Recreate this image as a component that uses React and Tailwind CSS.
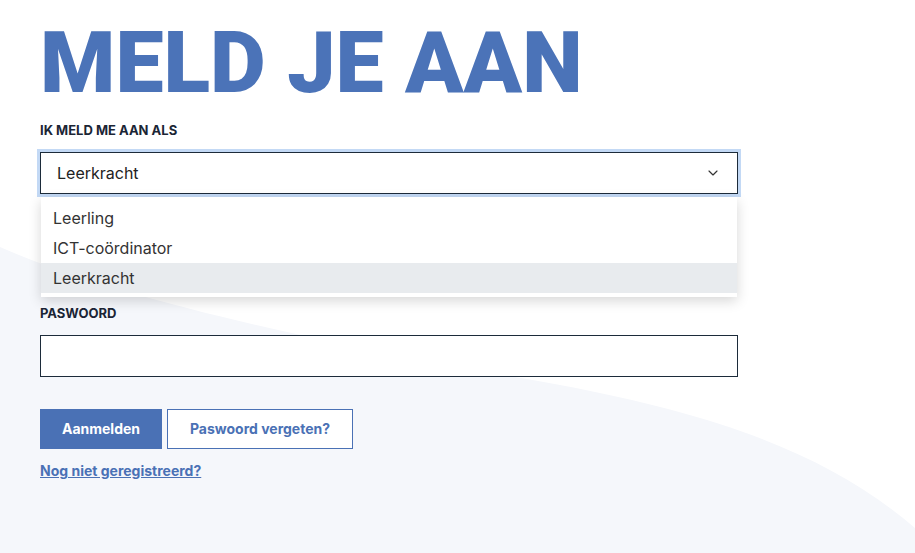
import { ChevronDown } from 'lucide-react';

const roles = ['Leerling', 'ICT-coördinator', 'Leerkracht'];

const Field = ({ label, children }) => (
  <div className="mb-6">
    <div className="mb-[14px] h-4 text-[13px] font-bold uppercase leading-4 text-[#1b2535]">{label}</div>
    {children}
  </div>
);

export default function App() {
  const selected = 'Leerkracht';

  return (
    <div className="relative min-h-[553px] w-full overflow-hidden bg-white font-['Inter',sans-serif]">
      {/* background wave */}
      <svg
        className="absolute inset-0 h-[553px] w-full"
        viewBox="0 0 915 553"
        preserveAspectRatio="none"
      >
        <path
          d="M0 247 C 120 300, 330 345, 560 385 C 720 415, 830 455, 915 528 L 915 553 L 0 553 Z"
          fill="#f5f7fb"
        />
      </svg>

      <div className="relative w-[698px] ml-10 pt-5">
        <h1 className="mb-4 font-['Roboto',sans-serif] text-[86px] font-black leading-none text-[#4b73b8]">
          MELD JE AAN
        </h1>

        <Field label="Ik meld me aan als">
          <div className="relative">
            <div className="flex h-[42px] items-center justify-between border border-[#1c2b3a] bg-white pl-4 pr-4 text-base text-[#222] outline-[3px] outline-solid outline-[#c3d9f5]">
              <span>{selected}</span>
              <ChevronDown size={16} strokeWidth={1.75} className="text-[#333]" />
            </div>
            {/* open options list, covers the e-mail field */}
            <div className="absolute left-px right-px top-[45px] z-10 bg-white pt-1.5 pb-1 shadow-[0_4px_12px_rgba(0,0,0,0.16)]">
              {roles.map((role) => (
                <div
                  key={role}
                  className={`flex h-[30px] items-center px-3 text-base text-[#333] ${
                    role === selected ? 'bg-[#e8ebee]' : ''
                  }`}
                >
                  {role}
                </div>
              ))}
            </div>
          </div>
        </Field>

        <div className="h-[87px]" />

        <Field label="Paswoord">
          <div className="h-[42px] border border-[#1c2b3a] bg-white" />
        </Field>

        <div className="mt-8 flex gap-[5px]">
          <button className="h-10 w-[122px] bg-[#4a71b5] text-sm font-bold text-white">Aanmelden</button>
          <button className="h-10 w-[186px] border border-[#4a71b5] bg-white text-sm font-bold text-[#4a71b5]">
            Paswoord vergeten?
          </button>
        </div>

        <a href="#" className="mt-3 inline-block text-sm font-bold text-[#4a71b5] underline">
          Nog niet geregistreerd?
        </a>
      </div>
    </div>
  );
}
